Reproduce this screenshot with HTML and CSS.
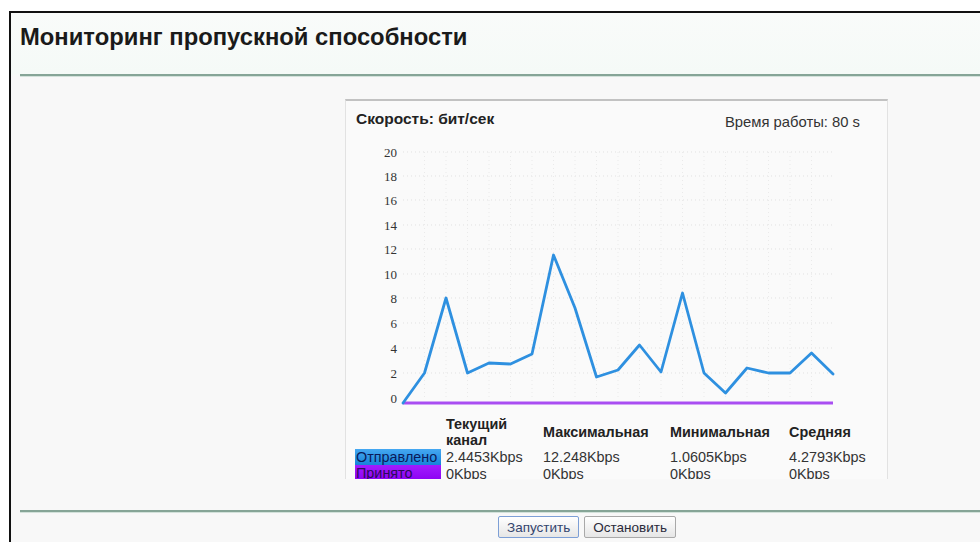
FILE: index.html
```html
<!DOCTYPE html>
<html lang="ru">
<head>
<meta charset="utf-8">
<title>Мониторинг пропускной способности</title>
<link rel="stylesheet" href="styles.css">
</head>
<body>
<div class="frame">
  <h1 class="title">Мониторинг пропускной способности</h1>
  <div class="rule"></div>

  <section class="panel">
    <div class="panel-head">
      <span class="unit">Скорость: бит/сек</span>
      <span class="uptime">Время работы: 80 s</span>
    </div>

    <svg class="plot" width="541" height="270" viewBox="0 0 541 270">
      <g class="grid-h">
        <line x1="57" y1="12" x2="487" y2="12"/>
        <line x1="57" y1="36" x2="487" y2="36"/>
        <line x1="57" y1="60" x2="487" y2="60"/>
        <line x1="57" y1="85" x2="487" y2="85"/>
        <line x1="57" y1="109" x2="487" y2="109"/>
        <line x1="57" y1="134" x2="487" y2="134"/>
        <line x1="57" y1="158" x2="487" y2="158"/>
        <line x1="57" y1="183" x2="487" y2="183"/>
        <line x1="57" y1="208" x2="487" y2="208"/>
        <line x1="57" y1="233" x2="487" y2="233"/>
      </g>
      <g class="grid-v">
        <line x1="78.5" y1="12" x2="78.5" y2="258"/>
        <line x1="100" y1="12" x2="100" y2="258"/>
        <line x1="121.5" y1="12" x2="121.5" y2="258"/>
        <line x1="143" y1="12" x2="143" y2="258"/>
        <line x1="164.5" y1="12" x2="164.5" y2="258"/>
        <line x1="186" y1="12" x2="186" y2="258"/>
        <line x1="207.5" y1="12" x2="207.5" y2="258"/>
        <line x1="229" y1="12" x2="229" y2="258"/>
        <line x1="250.5" y1="12" x2="250.5" y2="258"/>
        <line x1="272" y1="12" x2="272" y2="258"/>
        <line x1="293.5" y1="12" x2="293.5" y2="258"/>
        <line x1="315" y1="12" x2="315" y2="258"/>
        <line x1="336.5" y1="12" x2="336.5" y2="258"/>
        <line x1="358" y1="12" x2="358" y2="258"/>
        <line x1="379.5" y1="12" x2="379.5" y2="258"/>
        <line x1="401" y1="12" x2="401" y2="258"/>
        <line x1="422.5" y1="12" x2="422.5" y2="258"/>
        <line x1="444" y1="12" x2="444" y2="258"/>
        <line x1="465.5" y1="12" x2="465.5" y2="258"/>
      </g>
      <g class="axis">
        <text x="51" y="16.5">20</text>
        <text x="51" y="40.5">18</text>
        <text x="51" y="64.5">16</text>
        <text x="51" y="89.5">14</text>
        <text x="51" y="113.5">12</text>
        <text x="51" y="138.5">10</text>
        <text x="51" y="162.5">8</text>
        <text x="51" y="187.5">6</text>
        <text x="51" y="212.5">4</text>
        <text x="51" y="237.5">2</text>
        <text x="51" y="262.5">0</text>
      </g>
      <line class="series-rx" x1="57" y1="263" x2="487" y2="263"/>
      <polyline class="series-tx" points="57,263 78.5,233 100,158 121.5,233 143,223 164.5,224 186,214 207.5,115 229,168 250.5,237 272,230 293.5,205 315,232 336.5,153 358,233 379.5,253 401,228 422.5,233 444,233 465.5,213 487,234"/>
    </svg>

    <div class="stats">
      <div class="cell"></div>
      <div class="cell head first">Текущий<br>канал</div>
      <div class="cell head">Максимальная</div>
      <div class="cell head">Минимальная</div>
      <div class="cell head">Средняя</div>

      <div class="cell tag tag-tx">Отправлено</div>
      <div class="cell first">2.4453Kbps</div>
      <div class="cell">12.248Kbps</div>
      <div class="cell">1.0605Kbps</div>
      <div class="cell">4.2793Kbps</div>

      <div class="cell tag tag-rx">Принято</div>
      <div class="cell first">0Kbps</div>
      <div class="cell">0Kbps</div>
      <div class="cell">0Kbps</div>
      <div class="cell">0Kbps</div>
    </div>
  </section>

  <div class="rule rule-low"></div>

  <div class="actions">
    <button class="btn btn-focus" type="button">Запустить</button>
    <button class="btn" type="button">Остановить</button>
  </div>
</div>
</body>
</html>
```

FILE: styles.css
```css
html, body {
  margin: 0;
  padding: 0;
  background: #ffffff;
  overflow: hidden;
}

body {
  font-family: "Liberation Sans", Arial, sans-serif;
  color: #333;
  height: 542px;
}

.frame {
  margin: 11px 0 0 9px;
  border-top: 2px solid #111;
  border-left: 2px solid #111;
  padding-left: 9px;
  height: 529px;
  background: linear-gradient(#f9fbfa 0, #f5faf7 60px, #f8f8f8 64px, #f8f8f8 100%);
}

.title {
  margin: 0;
  padding-top: 10px;
  font-size: 23.8px;
  line-height: 27px;
  font-weight: bold;
  color: #1a1a1a;
}

.rule {
  margin-top: 24px;
  height: 2px;
  background: #86a597;
  box-shadow: 0 1px 0 #d3e2db;
}

.rule-low {
  margin-top: 31px;
}

/* chart card */
.panel {
  box-sizing: border-box;
  width: 543px;
  height: 380px;
  margin: 23px 0 0 325px;
  background: #fafafa;
  border: 1px solid #e2e2e2;
  border-top: 2px solid #c2c2c2;
  border-bottom: 0;
  overflow: hidden;
}

.panel-head {
  box-sizing: border-box;
  height: 39px;
  padding: 10px 27px 0 10px;
  display: flex;
  justify-content: space-between;
  align-items: flex-start;
  line-height: 16px;
}

.unit {
  font-size: 15.5px;
  font-weight: bold;
  color: #222;
}

.uptime {
  margin-top: 3px;
  font-size: 14.8px;
  color: #333;
}

.plot {
  display: block;
}

.grid-h line {
  stroke: #e1e1e1;
  stroke-width: 1;
  stroke-dasharray: 1 3;
}

.grid-v line {
  stroke: #eaeaea;
  stroke-width: 1;
  stroke-dasharray: 1 3;
}

.axis text {
  font-family: "Liberation Serif", "Times New Roman", serif;
  font-size: 13px;
  fill: #333;
  text-anchor: end;
}

.series-rx {
  stroke: #a94ef2;
  stroke-width: 3;
}

.series-tx {
  fill: none;
  stroke: #2e90e0;
  stroke-width: 2.8;
  stroke-linejoin: round;
  stroke-linecap: round;
}

/* summary table */
.stats {
  margin-top: 5px;
  padding-left: 9px;
  display: grid;
  grid-template-columns: 86px 102px 127px 119px 1fr;
  grid-template-rows: 33px 17px 17px;
  font-size: 14.4px;
  line-height: 16px;
  color: #333;
}

.cell {
  white-space: nowrap;
}

.cell.first {
  padding-left: 5px;
}

.head {
  font-weight: bold;
  align-self: center;
  color: #222;
}

.tag {
  padding-left: 1px;
}

.tag-tx {
  margin-top: 1px;
  background: linear-gradient(#45a8f2, #1783da);
  color: #0b1a5a;
}

.tag-rx {
  background: linear-gradient(#a21cff, #8a00f0);
  color: #2c0a5a;
}

.stats .cell:not(.head):not(.tag) {
  padding-top: 1px;
}

/* buttons */
.actions {
  margin-top: 4px;
  padding-left: 478px;
  display: flex;
  gap: 5px;
}

.btn {
  box-sizing: border-box;
  height: 22px;
  padding: 0 8px;
  font-family: "Liberation Sans", Arial, sans-serif;
  font-size: 13.5px;
  color: #2a2a3a;
  background: linear-gradient(#ffffff, #e6e6e6);
  border: 1px solid #a9a9a9;
  border-radius: 2px;
}

.btn-focus {
  border-color: #7d9fd6;
  color: #33456e;
}
```
